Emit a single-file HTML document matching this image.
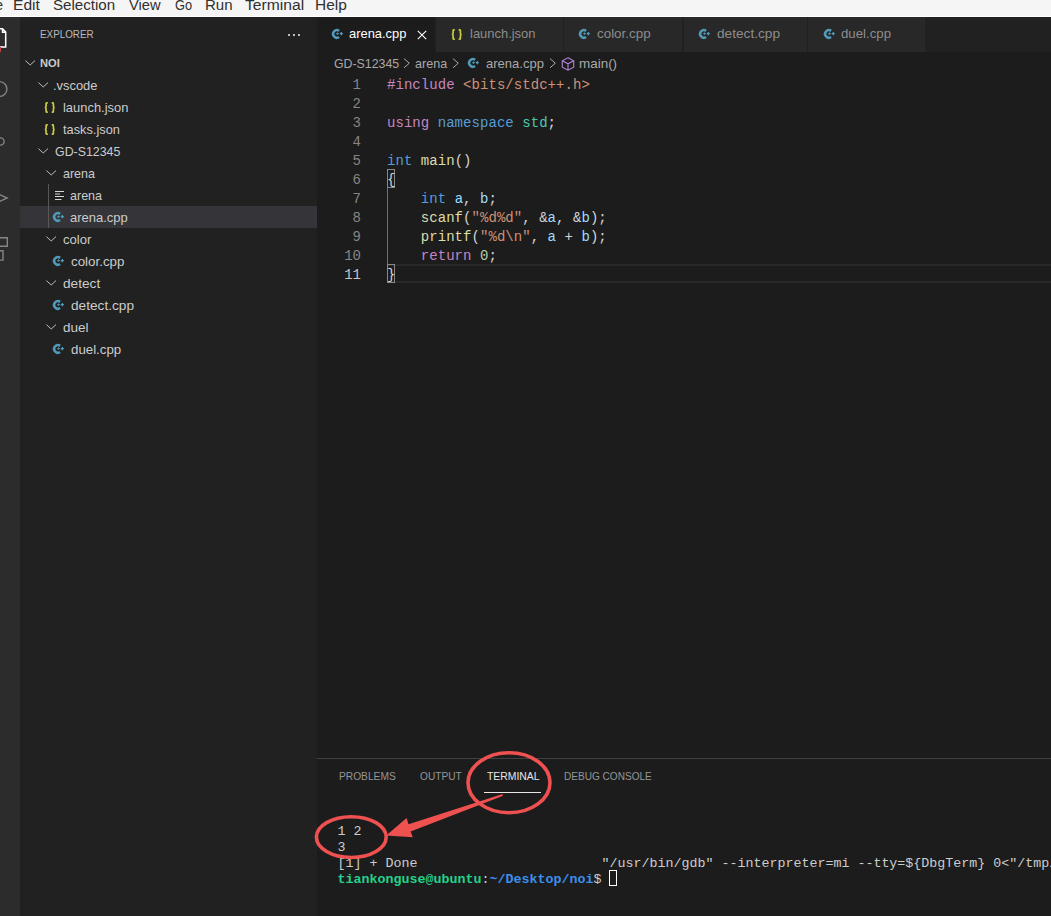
<!DOCTYPE html>
<html><head><meta charset="utf-8"><style>
*{margin:0;padding:0;box-sizing:border-box}
html,body{width:1051px;height:916px;overflow:hidden;background:#1c1c1c;font-family:"Liberation Sans",sans-serif;position:relative}
div,span,svg{position:absolute}
span{white-space:pre}
span span{position:static}
.m{font-family:"Liberation Mono",monospace}
</style></head><body>
<div style="left:0;top:0;width:1051px;height:16px;background:#f5f5f5"></div>
<div style="left:0;top:16px;width:1051px;height:1px;background:#ffffff"></div>
<span style="left:-4.80px;top:-5.85px;font-size:14px;line-height:22px;color:#303030;">e</span>
<span style="left:13.49px;top:-5.85px;font-size:14px;line-height:22px;color:#303030;transform:scaleX(1.1147);transform-origin:0 0;">Edit</span>
<span style="left:53.40px;top:-5.85px;font-size:14px;line-height:22px;color:#303030;transform:scaleX(1.0791);transform-origin:0 0;">Selection</span>
<span style="left:128.60px;top:-5.85px;font-size:14px;line-height:22px;color:#303030;transform:scaleX(1.0490);transform-origin:0 0;">View</span>
<span style="left:174.70px;top:-5.85px;font-size:14px;line-height:22px;color:#303030;transform:scaleX(0.9158);transform-origin:0 0;">Go</span>
<span style="left:204.52px;top:-5.85px;font-size:14px;line-height:22px;color:#303030;transform:scaleX(1.0755);transform-origin:0 0;">Run</span>
<span style="left:245.00px;top:-5.85px;font-size:14px;line-height:22px;color:#303030;transform:scaleX(1.1176);transform-origin:0 0;">Terminal</span>
<span style="left:315.40px;top:-5.85px;font-size:14px;line-height:22px;color:#303030;transform:scaleX(1.1033);transform-origin:0 0;">Help</span>
<div style="left:0;top:17px;width:20px;height:899px;background:#2c2c2c"></div>
<svg style="left:0;top:0" width="20" height="300" viewBox="0 0 20 300"><path d="M-9 28.8h11.5l3.2 3.2v15h-14.7z M2.5 28.8v3.5h3.2" fill="none" stroke="#ffffff" stroke-width="1.5"/><path d="M0.5 47v5" stroke="#c04040" stroke-width="1"/><circle cx="-0.5" cy="89" r="7.4" fill="none" stroke="#858585" stroke-width="1.4"/><circle cx="0.5" cy="141.5" r="3.6" fill="none" stroke="#858585" stroke-width="1.4"/><path d="M-1 144.5l-3 3" stroke="#858585" stroke-width="1.4"/><path d="M-10 190l17.2 8-17.2 8" fill="none" stroke="#858585" stroke-width="1.4"/><path d="M-10 237.7h17.3v8.6h-17.3z M-10 250.7h13v9.4h-13z" fill="none" stroke="#858585" stroke-width="1.4"/></svg>
<div style="left:20px;top:17px;width:297px;height:899px;background:#212121"></div>
<span style="left:40.30px;top:23.29px;font-size:11px;line-height:22px;color:#bbbbbb;transform:scaleX(0.8955);transform-origin:0 0;">EXPLORER</span>
<div style="left:288px;top:34px;width:2px;height:2px;background:#bdbdbd"></div>
<div style="left:293px;top:34px;width:2px;height:2px;background:#bdbdbd"></div>
<div style="left:298px;top:34px;width:2px;height:2px;background:#bdbdbd"></div>
<div style="left:20px;top:206px;width:297px;height:22px;background:#343439"></div>
<div style="left:48px;top:184px;width:1px;height:44px;background:#585858"></div>
<svg style="left:25px;top:60.30px" width="11" height="7" viewBox="0 0 11 7"><path d="M0.4 0.6l4.8 4.4 4.8-4.4" fill="none" stroke="#c5c5c5" stroke-width="0.95"/></svg>
<span style="left:40.30px;top:52.19px;font-size:11px;line-height:22px;color:#cccccc;font-weight:bold;transform:scaleX(1.0103);transform-origin:0 0;">NOI</span>
<svg style="left:38px;top:82.30px" width="11" height="7" viewBox="0 0 11 7"><path d="M0.4 0.6l4.8 4.4 4.8-4.4" fill="none" stroke="#c5c5c5" stroke-width="0.95"/></svg>
<span style="left:53.34px;top:74.92px;font-size:13.5px;line-height:22px;color:#cccccc;transform:scaleX(0.9552);transform-origin:0 0;">.vscode</span>
<svg style="left:44.40px;top:101.60px" width="12" height="12" viewBox="0 0 12 12"><path d="M3.8 0.8H3Q2.1 0.8 2.1 1.8V4.3Q2.1 5.5 0.8 5.5Q2.1 5.5 2.1 6.7V9.2Q2.1 10.2 3 10.2H3.8" fill="none" stroke="#cbcb41" stroke-width="1.7"/><path d="M7.7 0.8H8.5Q9.4 0.8 9.4 1.8V4.3Q9.4 5.5 10.7 5.5Q9.4 5.5 9.4 6.7V9.2Q9.4 10.2 8.5 10.2H7.7" fill="none" stroke="#cbcb41" stroke-width="1.7"/></svg>
<span style="left:62.60px;top:96.92px;font-size:13.5px;line-height:22px;color:#cccccc;transform:scaleX(0.9574);transform-origin:0 0;">launch.json</span>
<svg style="left:44.40px;top:123.60px" width="12" height="12" viewBox="0 0 12 12"><path d="M3.8 0.8H3Q2.1 0.8 2.1 1.8V4.3Q2.1 5.5 0.8 5.5Q2.1 5.5 2.1 6.7V9.2Q2.1 10.2 3 10.2H3.8" fill="none" stroke="#cbcb41" stroke-width="1.7"/><path d="M7.7 0.8H8.5Q9.4 0.8 9.4 1.8V4.3Q9.4 5.5 10.7 5.5Q9.4 5.5 9.4 6.7V9.2Q9.4 10.2 8.5 10.2H7.7" fill="none" stroke="#cbcb41" stroke-width="1.7"/></svg>
<span style="left:62.60px;top:118.92px;font-size:13.5px;line-height:22px;color:#cccccc;transform:scaleX(0.9476);transform-origin:0 0;">tasks.json</span>
<svg style="left:38px;top:148.30px" width="11" height="7" viewBox="0 0 11 7"><path d="M0.4 0.6l4.8 4.4 4.8-4.4" fill="none" stroke="#c5c5c5" stroke-width="0.95"/></svg>
<span style="left:54.60px;top:140.92px;font-size:13.5px;line-height:22px;color:#cccccc;transform:scaleX(0.9169);transform-origin:0 0;">GD-S12345</span>
<svg style="left:46px;top:170.30px" width="11" height="7" viewBox="0 0 11 7"><path d="M0.4 0.6l4.8 4.4 4.8-4.4" fill="none" stroke="#c5c5c5" stroke-width="0.95"/></svg>
<span style="left:62.60px;top:162.92px;font-size:13.5px;line-height:22px;color:#cccccc;transform:scaleX(0.9252);transform-origin:0 0;">arena</span>
<svg style="left:55px;top:191px" width="10" height="10" viewBox="0 0 10 10"><path d="M0 0.5h9M0 3h5M0 5.5h9M0 8.5h6.5" stroke="#d4d7d6" stroke-width="1"/></svg>
<span style="left:70.40px;top:184.92px;font-size:13.5px;line-height:22px;color:#cccccc;transform:scaleX(0.9280);transform-origin:0 0;">arena</span>
<svg style="left:51.70px;top:211.00px" width="14" height="12" viewBox="0 0 14 12"><path d="M8.1 2.85A3.75 3.75 0 1 0 8.1 8.95" fill="none" stroke="#519aba" stroke-width="2.6"/><path d="M5.3 5.6h2.4M6.5 4.4v2.4" stroke="#519aba" stroke-width="1.1"/><path d="M8.7 5.6h3.2M10.3 4v3.2" stroke="#519aba" stroke-width="1.3"/></svg>
<span style="left:70.30px;top:206.92px;font-size:13.5px;line-height:22px;color:#cccccc;transform:scaleX(0.9624);transform-origin:0 0;">arena.cpp</span>
<svg style="left:46px;top:236.30px" width="11" height="7" viewBox="0 0 11 7"><path d="M0.4 0.6l4.8 4.4 4.8-4.4" fill="none" stroke="#c5c5c5" stroke-width="0.95"/></svg>
<span style="left:62.60px;top:228.92px;font-size:13.5px;line-height:22px;color:#cccccc;transform:scaleX(0.9709);transform-origin:0 0;">color</span>
<svg style="left:51.70px;top:255.00px" width="14" height="12" viewBox="0 0 14 12"><path d="M8.1 2.85A3.75 3.75 0 1 0 8.1 8.95" fill="none" stroke="#519aba" stroke-width="2.6"/><path d="M5.3 5.6h2.4M6.5 4.4v2.4" stroke="#519aba" stroke-width="1.1"/><path d="M8.7 5.6h3.2M10.3 4v3.2" stroke="#519aba" stroke-width="1.3"/></svg>
<span style="left:70.50px;top:250.92px;font-size:13.5px;line-height:22px;color:#cccccc;transform:scaleX(0.9883);transform-origin:0 0;">color.cpp</span>
<svg style="left:46px;top:280.30px" width="11" height="7" viewBox="0 0 11 7"><path d="M0.4 0.6l4.8 4.4 4.8-4.4" fill="none" stroke="#c5c5c5" stroke-width="0.95"/></svg>
<span style="left:62.50px;top:272.92px;font-size:13.5px;line-height:22px;color:#cccccc;transform:scaleX(1.0128);transform-origin:0 0;">detect</span>
<svg style="left:51.70px;top:299.00px" width="14" height="12" viewBox="0 0 14 12"><path d="M8.1 2.85A3.75 3.75 0 1 0 8.1 8.95" fill="none" stroke="#519aba" stroke-width="2.6"/><path d="M5.3 5.6h2.4M6.5 4.4v2.4" stroke="#519aba" stroke-width="1.1"/><path d="M8.7 5.6h3.2M10.3 4v3.2" stroke="#519aba" stroke-width="1.3"/></svg>
<span style="left:70.50px;top:294.92px;font-size:13.5px;line-height:22px;color:#cccccc;transform:scaleX(1.0116);transform-origin:0 0;">detect.cpp</span>
<svg style="left:46px;top:324.30px" width="11" height="7" viewBox="0 0 11 7"><path d="M0.4 0.6l4.8 4.4 4.8-4.4" fill="none" stroke="#c5c5c5" stroke-width="0.95"/></svg>
<span style="left:62.50px;top:316.92px;font-size:13.5px;line-height:22px;color:#cccccc;transform:scaleX(0.9991);transform-origin:0 0;">duel</span>
<svg style="left:51.70px;top:343.00px" width="14" height="12" viewBox="0 0 14 12"><path d="M8.1 2.85A3.75 3.75 0 1 0 8.1 8.95" fill="none" stroke="#519aba" stroke-width="2.6"/><path d="M5.3 5.6h2.4M6.5 4.4v2.4" stroke="#519aba" stroke-width="1.1"/><path d="M8.7 5.6h3.2M10.3 4v3.2" stroke="#519aba" stroke-width="1.3"/></svg>
<span style="left:70.50px;top:338.92px;font-size:13.5px;line-height:22px;color:#cccccc;transform:scaleX(0.9835);transform-origin:0 0;">duel.cpp</span>
<div style="left:317px;top:17px;width:734px;height:35px;background:#212121"></div>
<div style="left:317px;top:17px;width:118px;height:35px;background:#1c1c1c"></div>
<svg style="left:330.90px;top:28.00px" width="14" height="12" viewBox="0 0 14 12"><path d="M8.1 2.85A3.75 3.75 0 1 0 8.1 8.95" fill="none" stroke="#519aba" stroke-width="2.6"/><path d="M5.3 5.6h2.4M6.5 4.4v2.4" stroke="#519aba" stroke-width="1.1"/><path d="M8.7 5.6h3.2M10.3 4v3.2" stroke="#519aba" stroke-width="1.3"/></svg>
<span style="left:349.30px;top:23.32px;font-size:13.5px;line-height:22px;color:#ffffff;transform:scaleX(0.9557);transform-origin:0 0;">arena.cpp</span>
<div style="left:436px;top:17px;width:127px;height:35px;background:#282828"></div>
<svg style="left:451.30px;top:28.70px" width="12" height="12" viewBox="0 0 12 12"><path d="M3.8 0.8H3Q2.1 0.8 2.1 1.8V4.3Q2.1 5.5 0.8 5.5Q2.1 5.5 2.1 6.7V9.2Q2.1 10.2 3 10.2H3.8" fill="none" stroke="#cbcb41" stroke-width="1.7"/><path d="M7.7 0.8H8.5Q9.4 0.8 9.4 1.8V4.3Q9.4 5.5 10.7 5.5Q9.4 5.5 9.4 6.7V9.2Q9.4 10.2 8.5 10.2H7.7" fill="none" stroke="#cbcb41" stroke-width="1.7"/></svg>
<span style="left:469.80px;top:23.32px;font-size:13.5px;line-height:22px;color:#8d8d8d;transform:scaleX(0.9588);transform-origin:0 0;">launch.json</span>
<div style="left:564px;top:17px;width:118px;height:35px;background:#282828"></div>
<svg style="left:577.90px;top:28.00px" width="14" height="12" viewBox="0 0 14 12"><path d="M8.1 2.85A3.75 3.75 0 1 0 8.1 8.95" fill="none" stroke="#519aba" stroke-width="2.6"/><path d="M5.3 5.6h2.4M6.5 4.4v2.4" stroke="#519aba" stroke-width="1.1"/><path d="M8.7 5.6h3.2M10.3 4v3.2" stroke="#519aba" stroke-width="1.3"/></svg>
<span style="left:596.50px;top:23.32px;font-size:13.5px;line-height:22px;color:#8d8d8d;transform:scaleX(0.9921);transform-origin:0 0;">color.cpp</span>
<div style="left:684px;top:17px;width:123px;height:35px;background:#282828"></div>
<svg style="left:697.90px;top:28.00px" width="14" height="12" viewBox="0 0 14 12"><path d="M8.1 2.85A3.75 3.75 0 1 0 8.1 8.95" fill="none" stroke="#519aba" stroke-width="2.6"/><path d="M5.3 5.6h2.4M6.5 4.4v2.4" stroke="#519aba" stroke-width="1.1"/><path d="M8.7 5.6h3.2M10.3 4v3.2" stroke="#519aba" stroke-width="1.3"/></svg>
<span style="left:716.50px;top:23.32px;font-size:13.5px;line-height:22px;color:#8d8d8d;transform:scaleX(1.0116);transform-origin:0 0;">detect.cpp</span>
<div style="left:808px;top:17px;width:117px;height:35px;background:#282828"></div>
<svg style="left:822.90px;top:28.00px" width="14" height="12" viewBox="0 0 14 12"><path d="M8.1 2.85A3.75 3.75 0 1 0 8.1 8.95" fill="none" stroke="#519aba" stroke-width="2.6"/><path d="M5.3 5.6h2.4M6.5 4.4v2.4" stroke="#519aba" stroke-width="1.1"/><path d="M8.7 5.6h3.2M10.3 4v3.2" stroke="#519aba" stroke-width="1.3"/></svg>
<span style="left:841.00px;top:23.32px;font-size:13.5px;line-height:22px;color:#8d8d8d;transform:scaleX(0.9796);transform-origin:0 0;">duel.cpp</span>
<svg style="left:417px;top:30px" width="10" height="10" viewBox="0 0 10 10"><path d="M0.8 0.8l8.4 8.4M9.2 0.8l-8.4 8.4" stroke="#ffffff" stroke-width="1.1"/></svg>
<span style="left:333.50px;top:52.72px;font-size:13.5px;line-height:22px;color:#a9a9a9;transform:scaleX(0.9141);transform-origin:0 0;">GD-S12345</span>
<svg style="left:403px;top:58.2px" width="8" height="11" viewBox="0 0 8 11"><path d="M1 0.6l5.3 4.6-5.3 4.6" fill="none" stroke="#a9a9a9" stroke-width="1"/></svg>
<span style="left:414.80px;top:52.72px;font-size:13.5px;line-height:22px;color:#a9a9a9;transform:scaleX(0.9309);transform-origin:0 0;">arena</span>
<svg style="left:452px;top:58.2px" width="8" height="11" viewBox="0 0 8 11"><path d="M1 0.6l5.3 4.6-5.3 4.6" fill="none" stroke="#a9a9a9" stroke-width="1"/></svg>
<svg style="left:467.10px;top:57.20px" width="14" height="12" viewBox="0 0 14 12"><path d="M8.1 2.85A3.75 3.75 0 1 0 8.1 8.95" fill="none" stroke="#519aba" stroke-width="2.6"/><path d="M5.3 5.6h2.4M6.5 4.4v2.4" stroke="#519aba" stroke-width="1.1"/><path d="M8.7 5.6h3.2M10.3 4v3.2" stroke="#519aba" stroke-width="1.3"/></svg>
<span style="left:485.90px;top:52.72px;font-size:13.5px;line-height:22px;color:#a9a9a9;transform:scaleX(0.9641);transform-origin:0 0;">arena.cpp</span>
<svg style="left:549px;top:58.2px" width="8" height="11" viewBox="0 0 8 11"><path d="M1 0.6l5.3 4.6-5.3 4.6" fill="none" stroke="#a9a9a9" stroke-width="1"/></svg>
<svg style="left:561px;top:57px" width="14" height="14" viewBox="0 0 14 14"><path d="M7 0.8l5.7 3v6.4L7 13.2 1.3 10.2V3.8z M1.3 3.8L7 6.8l5.7-3 M7 6.8v6.4" fill="none" stroke="#b180d7" stroke-width="1.1"/></svg>
<span style="left:579.40px;top:52.72px;font-size:13.5px;line-height:22px;color:#a9a9a9;transform:scaleX(0.9959);transform-origin:0 0;">main()</span>
<div style="left:387px;top:264px;width:664px;height:19px;border-top:2px solid #282828;border-bottom:2px solid #282828"></div>
<div style="left:387px;top:188px;width:1px;height:76px;background:#707070"></div>
<div style="left:387px;top:169px;width:8px;height:19px;border:1px solid #888888"></div>
<div style="left:387px;top:264px;width:8px;height:19px;border:1px solid #888888"></div>
<span class="m" style="left:300px;width:61px;text-align:right;top:76.17px;font-size:14px;line-height:19px;color:#858585">1</span>
<span class="m" style="left:387px;top:76.17px;font-size:14px;line-height:19px;letter-spacing:0.050px"><span style="color:#c586c0">#include</span><span style="color:#d4d4d4"> </span><span style="color:#ce9178">&lt;bits/stdc++.h&gt;</span></span>
<span class="m" style="left:300px;width:61px;text-align:right;top:95.17px;font-size:14px;line-height:19px;color:#858585">2</span>
<span class="m" style="left:300px;width:61px;text-align:right;top:114.17px;font-size:14px;line-height:19px;color:#858585">3</span>
<span class="m" style="left:387px;top:114.17px;font-size:14px;line-height:19px;letter-spacing:0.050px"><span style="color:#c586c0">using</span><span style="color:#d4d4d4"> </span><span style="color:#569cd6">namespace</span><span style="color:#d4d4d4"> </span><span style="color:#4ec9b0">std</span><span style="color:#d4d4d4">;</span></span>
<span class="m" style="left:300px;width:61px;text-align:right;top:133.17px;font-size:14px;line-height:19px;color:#858585">4</span>
<span class="m" style="left:300px;width:61px;text-align:right;top:152.17px;font-size:14px;line-height:19px;color:#858585">5</span>
<span class="m" style="left:387px;top:152.17px;font-size:14px;line-height:19px;letter-spacing:0.050px"><span style="color:#569cd6">int</span><span style="color:#d4d4d4"> </span><span style="color:#dcdcaa">main</span><span style="color:#d4d4d4">()</span></span>
<span class="m" style="left:300px;width:61px;text-align:right;top:171.17px;font-size:14px;line-height:19px;color:#858585">6</span>
<span class="m" style="left:387px;top:171.17px;font-size:14px;line-height:19px;letter-spacing:0.050px"><span style="color:#d4d4d4">{</span></span>
<span class="m" style="left:300px;width:61px;text-align:right;top:190.17px;font-size:14px;line-height:19px;color:#858585">7</span>
<span class="m" style="left:387px;top:190.17px;font-size:14px;line-height:19px;letter-spacing:0.050px"><span style="color:#d4d4d4">    </span><span style="color:#569cd6">int</span><span style="color:#d4d4d4"> </span><span style="color:#9cdcfe">a</span><span style="color:#d4d4d4">, </span><span style="color:#9cdcfe">b</span><span style="color:#d4d4d4">;</span></span>
<span class="m" style="left:300px;width:61px;text-align:right;top:209.17px;font-size:14px;line-height:19px;color:#858585">8</span>
<span class="m" style="left:387px;top:209.17px;font-size:14px;line-height:19px;letter-spacing:0.050px"><span style="color:#d4d4d4">    </span><span style="color:#dcdcaa">scanf</span><span style="color:#d4d4d4">(</span><span style="color:#ce9178">"%d%d"</span><span style="color:#d4d4d4">, &amp;</span><span style="color:#9cdcfe">a</span><span style="color:#d4d4d4">, &amp;</span><span style="color:#9cdcfe">b</span><span style="color:#d4d4d4">);</span></span>
<span class="m" style="left:300px;width:61px;text-align:right;top:228.17px;font-size:14px;line-height:19px;color:#858585">9</span>
<span class="m" style="left:387px;top:228.17px;font-size:14px;line-height:19px;letter-spacing:0.050px"><span style="color:#d4d4d4">    </span><span style="color:#dcdcaa">printf</span><span style="color:#d4d4d4">(</span><span style="color:#ce9178">"%d\n"</span><span style="color:#d4d4d4">, </span><span style="color:#9cdcfe">a</span><span style="color:#d4d4d4"> + </span><span style="color:#9cdcfe">b</span><span style="color:#d4d4d4">);</span></span>
<span class="m" style="left:300px;width:61px;text-align:right;top:247.17px;font-size:14px;line-height:19px;color:#858585">10</span>
<span class="m" style="left:387px;top:247.17px;font-size:14px;line-height:19px;letter-spacing:0.050px"><span style="color:#d4d4d4">    </span><span style="color:#c586c0">return</span><span style="color:#d4d4d4"> </span><span style="color:#b5cea8">0</span><span style="color:#d4d4d4">;</span></span>
<span class="m" style="left:300px;width:61px;text-align:right;top:266.17px;font-size:14px;line-height:19px;color:#c6c6c6">11</span>
<span class="m" style="left:387px;top:266.17px;font-size:14px;line-height:19px;letter-spacing:0.050px"><span style="color:#d4d4d4">}</span></span>
<div style="left:317px;top:758px;width:734px;height:1px;background:#414141"></div>
<span style="left:339.30px;top:765.19px;font-size:11px;line-height:22px;color:#969696;transform:scaleX(0.9278);transform-origin:0 0;">PROBLEMS</span>
<span style="left:420.00px;top:765.19px;font-size:11px;line-height:22px;color:#969696;transform:scaleX(0.9231);transform-origin:0 0;">OUTPUT</span>
<span style="left:486.60px;top:765.19px;font-size:11px;line-height:22px;color:#e7e7e7;transform:scaleX(0.9441);transform-origin:0 0;">TERMINAL</span>
<span style="left:563.70px;top:765.19px;font-size:11px;line-height:22px;color:#969696;transform:scaleX(0.9150);transform-origin:0 0;">DEBUG CONSOLE</span>
<div style="left:484px;top:792px;width:57px;height:1px;background:#e7e7e7"></div>
<span class="m" style="left:337.5px;top:824.15px;font-size:13.33px;line-height:16px;color:#cccccc">1 2</span>
<span class="m" style="left:337.5px;top:840.15px;font-size:13.33px;line-height:16px;color:#cccccc">3</span>
<span class="m" style="left:337.5px;top:856.15px;font-size:13.33px;line-height:16px;color:#cccccc">[1] + Done                       "/usr/bin/gdb" --interpreter=mi --tty=${DbgTerm} 0&lt;"/tmp/Microsoft-MIEngine-In</span>
<span class="m" style="left:337.5px;top:872.15px;font-size:13.33px;line-height:16px;color:#cccccc"><span style="color:#23d18b;font-weight:bold">tiankonguse@ubuntu</span>:<span style="color:#3b8eea;font-weight:bold">~/Desktop/noi</span>$ </span>
<div style="left:609px;top:870px;width:8px;height:16px;border:1px solid #ffffff"></div>
<svg style="left:0;top:0" width="1051" height="916" viewBox="0 0 1051 916">
<ellipse cx="509" cy="782.7" rx="41" ry="30" fill="none" stroke="#ef5050" stroke-width="3.6"/>
<ellipse cx="351.3" cy="837.1" rx="34.9" ry="20.4" fill="none" stroke="#ef5050" stroke-width="3.6"/>
<path d="M502.6 793.9 L408.5 824.2 L406.6 818 L386.2 835.5 L412.8 837.2 L410.6 831.4 L502.6 796.1 Z" fill="#ef5050"/>
</svg>
</body></html>
